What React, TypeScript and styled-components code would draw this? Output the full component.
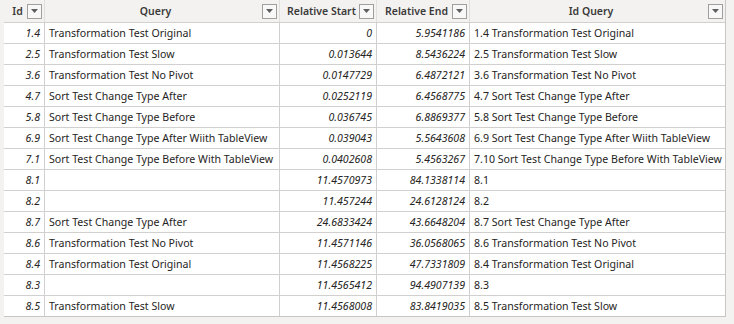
import styled, { createGlobalStyle } from "styled-components";

const GlobalStyle = createGlobalStyle`
    html, body {
        margin: 0;
        padding: 0;
        background: #f3f2f1;
    }
    body {
        font-family: "Noto Sans", "Open Sans", sans-serif;
        color: #252423;
    }
`;

type Row = {
    id: string;
    query: string;
    start: string;
    end: string;
    idQuery: string;
};

const rows: Row[] = [
    { id: "1.4", query: "Transformation Test Original", start: "0", end: "5.9541186", idQuery: "1.4 Transformation Test Original" },
    { id: "2.5", query: "Transformation Test Slow", start: "0.013644", end: "8.5436224", idQuery: "2.5 Transformation Test Slow" },
    { id: "3.6", query: "Transformation Test No Pivot", start: "0.0147729", end: "6.4872121", idQuery: "3.6 Transformation Test No Pivot" },
    { id: "4.7", query: "Sort Test Change Type After", start: "0.0252119", end: "6.4568775", idQuery: "4.7 Sort Test Change Type After" },
    { id: "5.8", query: "Sort Test Change Type Before", start: "0.036745", end: "6.8869377", idQuery: "5.8 Sort Test Change Type Before" },
    { id: "6.9", query: "Sort Test Change Type After Wiith TableView", start: "0.039043", end: "5.5643608", idQuery: "6.9 Sort Test Change Type After Wiith TableView" },
    { id: "7.1", query: "Sort Test Change Type Before With TableView", start: "0.0402608", end: "5.4563267", idQuery: "7.10 Sort Test Change Type Before With TableView" },
    { id: "8.1", query: "", start: "11.4570973", end: "84.1338114", idQuery: "8.1" },
    { id: "8.2", query: "", start: "11.457244", end: "24.6128124", idQuery: "8.2" },
    { id: "8.7", query: "Sort Test Change Type After", start: "24.6833424", end: "43.6648204", idQuery: "8.7 Sort Test Change Type After" },
    { id: "8.6", query: "Transformation Test No Pivot", start: "11.4571146", end: "36.0568065", idQuery: "8.6 Transformation Test No Pivot" },
    { id: "8.4", query: "Transformation Test Original", start: "11.4568225", end: "47.7331809", idQuery: "8.4 Transformation Test Original" },
    { id: "8.3", query: "", start: "11.4565412", end: "94.4907139", idQuery: "8.3" },
    { id: "8.5", query: "Transformation Test Slow", start: "11.4568008", end: "83.8419035", idQuery: "8.5 Transformation Test Slow" },
];

const columns = ["Id", "Query", "Relative Start", "Relative End", "Id Query"];

const FilterIcon = () => (
    <svg width="7" height="4" viewBox="0 0 7 4">
        <path d="M0 0 H7 L3.5 4 Z" fill="#605e5c" />
    </svg>
);

const App = () => {
    return (
        <>
            <GlobalStyle />
            <Page>
                <Grid>
                    <HeaderRow>
                        {columns.map((c) => (
                            <HeaderCell key={c}>
                                <HeaderTitle>{c}</HeaderTitle>
                                <FilterButton>
                                    <FilterIcon />
                                </FilterButton>
                            </HeaderCell>
                        ))}
                    </HeaderRow>
                    {rows.map((r, i) => (
                        <BodyRow key={i}>
                            <Cell $numeric>{r.id}</Cell>
                            <Cell>{r.query}</Cell>
                            <Cell $numeric>{r.start}</Cell>
                            <Cell $numeric>{r.end}</Cell>
                            <Cell>{r.idQuery}</Cell>
                        </BodyRow>
                    ))}
                </Grid>
            </Page>
        </>
    );
};

export default App;

const Page = styled.div`
    width: 734px;
    height: 324px;
    padding-left: 4px;
    box-sizing: border-box;
    overflow: hidden;
`;

const Grid = styled.div`
    display: flex;
    flex-direction: column;
    width: 721px;
    background: #ffffff;
    border-right: 1px solid #c8c6c4;
    border-bottom: 1px solid #c8c6c4;
`;

const Columns = `
    display: grid;
    grid-template-columns: 41px 235px 97px 93px 255px;
`;

const HeaderRow = styled.div`
    ${Columns}
    height: 22px;
    background: #f3f2f1;
`;

const HeaderCell = styled.div`
    display: flex;
    align-items: center;
    padding: 0 2px 0 4px;
    border-right: 1px solid #e1dfdd;
    font-size: 10.5px;
    font-weight: 600;
    color: #3b3a39;

    &:last-child {
        border-right: none;
    }
`;

const HeaderTitle = styled.span`
    flex: 1;
    text-align: center;
    white-space: nowrap;
`;

const FilterButton = styled.div`
    width: 13px;
    height: 13px;
    border: 1px solid #a19f9d;
    background: #f8f8f8;
    display: flex;
    align-items: center;
    justify-content: center;
    flex-shrink: 0;
`;

const BodyRow = styled.div`
    ${Columns}
    height: 21px;
    border-top: 1px solid #d2d0ce;
    box-sizing: border-box;
`;

const Cell = styled.div<{ $numeric?: boolean }>`
    display: flex;
    align-items: center;
    justify-content: ${(p) => (p.$numeric ? "flex-end" : "flex-start")};
    padding: 0 4px;
    border-right: 1px solid #d2d0ce;
    font-size: 10.6px;
    font-style: ${(p) => (p.$numeric ? "italic" : "normal")};
    white-space: nowrap;
    overflow: hidden;

    &:last-child {
        border-right: none;
    }
`;
